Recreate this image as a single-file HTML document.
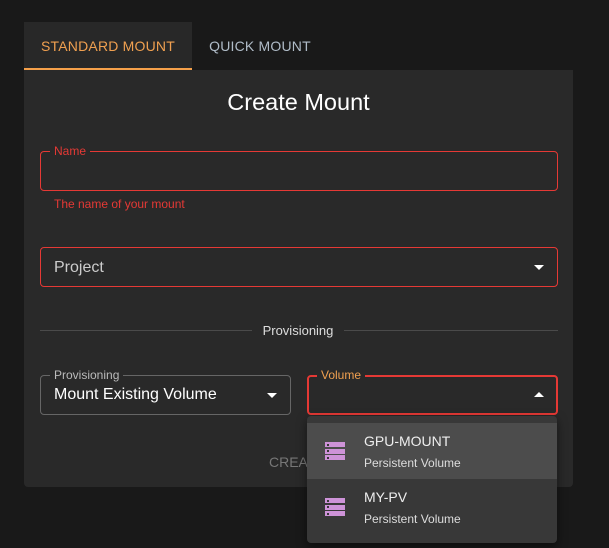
<!DOCTYPE html>
<html><head><style>
*{box-sizing:border-box;margin:0;padding:0}
body{width:609px;height:548px;background:#191919;font-family:"Liberation Sans",sans-serif;position:relative;overflow:hidden;color:#fff}
.a{position:absolute}
.tab{top:22px;height:48px;font-size:14px;line-height:48px;text-align:center;letter-spacing:.2px}
.fld{position:absolute;border-radius:4px}
.lbl{position:absolute;top:-8px;font-size:12px;padding:0 4px;background:#292929;line-height:14px}
.arr{position:absolute;width:0;height:0;border-left:5px solid transparent;border-right:5px solid transparent}
.item{position:absolute;left:0;width:250px;height:56px}
.ico{position:absolute;left:18px;top:19px;width:20px}
.ico div{height:5px;margin-bottom:1.5px;background:#ce93d8;position:relative}
.ico div:after{content:"";position:absolute;left:2px;top:1.5px;width:2px;height:2px;background:#383838}
.t1{position:absolute;left:57px;top:10px;font-size:14px;color:#eee}
.t2{position:absolute;left:57px;top:33px;font-size:12px;color:#ddd}
</style></head><body>
<div class="a tab" style="left:24px;width:168px;background:#282828;color:#f0a050">STANDARD MOUNT</div>
<div class="a" style="left:24px;top:68px;width:168px;height:2px;background:#f5a04a"></div>
<div class="a tab" style="left:192px;width:136px;color:#b0bcc8">QUICK MOUNT</div>
<div class="a" style="left:24px;top:70px;width:549px;height:417px;background:#292929;border-radius:0 0 4px 4px"></div>
<div class="a" style="left:24px;top:89px;width:549px;text-align:center;font-size:23.5px;color:#fff">Create Mount</div>
<div class="fld" style="left:40px;top:151px;width:518px;height:40px;border:1px solid #e53935"><span class="lbl" style="left:9px;color:#e53935">Name</span></div>
<div class="a" style="left:54px;top:197px;font-size:12px;color:#e53935">The name of your mount</div>
<div class="fld" style="left:40px;top:247px;width:518px;height:40px;border:1px solid #e53935"><span class="a" style="left:13px;top:11px;font-size:16px;color:#ccc">Project</span><div class="arr" style="right:13px;top:17px;border-top:5px solid #fff"></div></div>
<div class="a" style="left:40px;top:330px;width:212px;height:1px;background:#4a4a4a"></div>
<div class="a" style="left:344px;top:330px;width:214px;height:1px;background:#4a4a4a"></div>
<div class="a" style="left:252px;top:323px;width:92px;text-align:center;font-size:13px;color:#ddd">Provisioning</div>
<div class="fld" style="left:40px;top:375px;width:251px;height:40px;border:1px solid #666"><span class="lbl" style="left:9px;color:#bbb">Provisioning</span><span class="a" style="left:13px;top:10px;font-size:16px;color:#fff">Mount Existing Volume</span><div class="arr" style="right:13px;top:17px;border-top:5px solid #fff"></div></div>
<div class="fld" style="left:307px;top:375px;width:251px;height:40px;border:2px solid #e53935"><span class="lbl" style="left:8px;top:-9px;color:#f0a050">Volume</span><div class="arr" style="right:12px;top:15px;border-bottom:5px solid #fff"></div></div>
<div class="a" style="left:269px;top:454px;font-size:14px;color:#777">CREA</div>
<div class="a" style="left:307px;top:416px;width:250px;height:127px;background:#383838;border-radius:4px;box-shadow:0 4px 10px rgba(0,0,0,.5)">
<div class="item" style="top:7px;background:#4c4c4c"><div class="ico"><div></div><div></div><div></div></div><span class="t1">GPU-MOUNT</span><span class="t2">Persistent Volume</span></div>
<div class="item" style="top:63px"><div class="ico"><div></div><div></div><div></div></div><span class="t1">MY-PV</span><span class="t2">Persistent Volume</span></div>
</div>
</body></html>
